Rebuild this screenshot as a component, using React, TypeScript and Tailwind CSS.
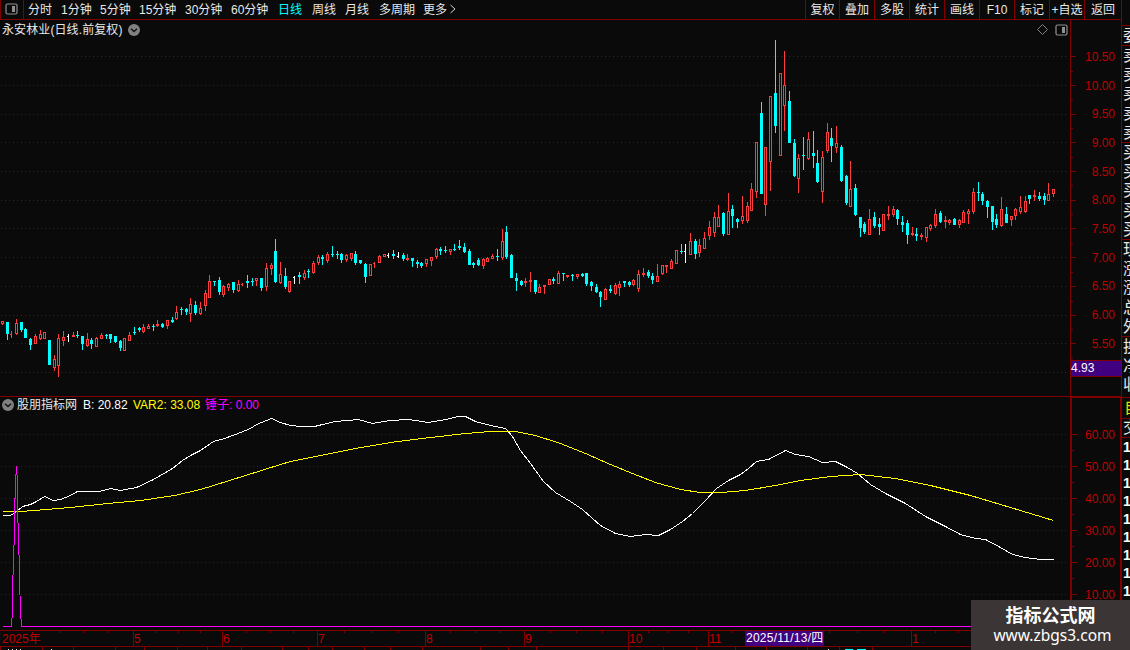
import React from 'react';

type Kind = 'r' | 'c' | 'w';
// x, high, body top, body bottom, low, kind
type Candle = [number, number, number, number, number, Kind];

const CANDLES: Candle[] = [
  [2, 321, 321, 324, 325, 'r'], [7, 322, 322, 334, 340, 'c'], [11, 331, 334, 335, 338, 'r'], [16, 319, 323, 334, 335, 'r'],
  [21, 322, 322, 330, 332, 'c'], [25, 328, 329, 338, 338, 'c'], [30, 338, 339, 345, 350, 'c'], [35, 334, 336, 344, 344, 'r'],
  [40, 330, 334, 339, 340, 'r'], [44, 332, 332, 339, 339, 'r'], [49, 340, 340, 365, 365, 'c'], [54, 355, 359, 368, 371, 'r'],
  [58, 334, 338, 366, 377, 'r'], [63, 331, 337, 341, 346, 'r'], [68, 334, 336, 337, 342, 'w'], [73, 332, 335, 337, 337, 'r'],
  [77, 331, 335, 336, 338, 'c'], [82, 336, 336, 344, 350, 'c'], [87, 333, 339, 346, 347, 'r'], [91, 338, 340, 344, 349, 'c'],
  [96, 337, 338, 347, 347, 'r'], [101, 333, 335, 339, 339, 'r'], [106, 334, 335, 336, 339, 'c'], [110, 334, 334, 339, 343, 'c'],
  [115, 336, 336, 342, 343, 'c'], [120, 340, 341, 348, 351, 'c'], [124, 338, 338, 351, 351, 'r'], [129, 332, 335, 341, 341, 'r'],
  [134, 327, 332, 333, 335, 'c'], [139, 327, 328, 330, 332, 'c'], [143, 324, 327, 332, 333, 'r'], [148, 324, 326, 329, 329, 'r'],
  [153, 324, 326, 327, 331, 'c'], [157, 320, 324, 326, 327, 'r'], [162, 323, 324, 327, 328, 'c'], [167, 320, 320, 326, 329, 'r'],
  [172, 317, 320, 322, 323, 'c'], [176, 306, 312, 319, 320, 'r'], [181, 307, 309, 310, 315, 'c'], [186, 308, 309, 312, 315, 'c'],
  [190, 298, 304, 314, 322, 'r'], [195, 301, 305, 313, 315, 'c'], [200, 302, 308, 314, 315, 'r'], [205, 290, 293, 306, 311, 'r'],
  [209, 275, 281, 298, 298, 'r'], [214, 281, 281, 282, 286, 'c'], [219, 277, 280, 292, 295, 'c'], [223, 285, 286, 295, 297, 'r'],
  [228, 283, 284, 288, 291, 'r'], [233, 282, 282, 290, 293, 'c'], [238, 280, 284, 291, 292, 'r'], [242, 283, 284, 285, 286, 'r'],
  [247, 275, 281, 283, 288, 'c'], [252, 278, 281, 282, 286, 'c'], [256, 278, 278, 281, 286, 'r'], [261, 278, 278, 288, 291, 'c'],
  [266, 263, 268, 287, 291, 'r'], [271, 263, 265, 269, 275, 'r'], [275, 239, 251, 282, 283, 'c'], [280, 262, 274, 283, 284, 'r'],
  [285, 268, 276, 287, 289, 'c'], [289, 281, 281, 292, 293, 'r'], [294, 276, 277, 278, 284, 'w'], [299, 272, 275, 277, 284, 'c'],
  [304, 270, 273, 278, 280, 'r'], [308, 269, 271, 272, 278, 'c'], [313, 261, 263, 273, 274, 'r'], [318, 255, 257, 263, 265, 'r'],
  [322, 255, 257, 259, 265, 'c'], [327, 252, 254, 261, 263, 'r'], [332, 246, 254, 255, 257, 'c'], [337, 251, 254, 255, 259, 'c'],
  [341, 253, 254, 260, 263, 'c'], [346, 254, 255, 260, 262, 'r'], [351, 253, 253, 259, 261, 'r'], [355, 251, 254, 263, 265, 'c'],
  [360, 260, 260, 263, 264, 'c'], [365, 263, 264, 277, 283, 'c'], [370, 264, 264, 276, 276, 'r'], [374, 262, 263, 264, 268, 'r'],
  [379, 255, 256, 263, 263, 'r'], [384, 254, 254, 257, 257, 'r'], [388, 253, 255, 256, 258, 'w'], [393, 250, 254, 256, 259, 'c'],
  [398, 252, 256, 257, 258, 'w'], [403, 253, 255, 259, 261, 'c'], [407, 254, 258, 260, 261, 'r'], [412, 258, 258, 261, 267, 'c'],
  [417, 260, 262, 264, 268, 'c'], [421, 262, 263, 266, 268, 'c'], [426, 259, 259, 264, 267, 'r'], [431, 257, 257, 261, 266, 'r'],
  [436, 248, 249, 257, 259, 'r'], [440, 247, 249, 251, 255, 'c'], [445, 246, 250, 251, 253, 'c'], [450, 249, 249, 252, 255, 'r'],
  [454, 244, 249, 250, 251, 'c'], [459, 240, 246, 248, 250, 'c'], [464, 243, 247, 252, 253, 'c'], [469, 249, 251, 265, 265, 'c'],
  [473, 262, 263, 265, 268, 'c'], [478, 258, 260, 265, 266, 'c'], [483, 258, 259, 266, 269, 'r'], [487, 257, 258, 262, 262, 'r'],
  [492, 254, 256, 259, 259, 'r'], [497, 249, 256, 257, 261, 'c'], [502, 229, 241, 258, 260, 'r'], [506, 226, 232, 257, 259, 'c'],
  [511, 254, 255, 278, 278, 'c'], [516, 273, 278, 281, 291, 'c'], [521, 280, 281, 285, 286, 'c'], [525, 278, 281, 283, 287, 'r'],
  [530, 272, 280, 282, 292, 'r'], [535, 280, 280, 292, 294, 'c'], [539, 284, 287, 293, 293, 'r'], [544, 285, 285, 287, 294, 'r'],
  [549, 279, 279, 285, 285, 'r'], [553, 277, 279, 281, 284, 'c'], [558, 271, 273, 284, 284, 'r'], [563, 273, 273, 274, 281, 'c'],
  [567, 275, 275, 277, 278, 'r'], [572, 274, 275, 276, 281, 'c'], [577, 274, 274, 277, 279, 'r'], [582, 273, 274, 276, 277, 'c'],
  [586, 273, 273, 284, 286, 'c'], [591, 281, 282, 286, 291, 'c'], [596, 284, 287, 292, 293, 'c'], [600, 291, 292, 297, 307, 'c'],
  [605, 288, 289, 300, 300, 'r'], [610, 285, 289, 291, 293, 'c'], [615, 283, 285, 294, 295, 'r'], [619, 281, 284, 288, 296, 'r'],
  [624, 281, 281, 283, 287, 'c'], [629, 281, 282, 285, 287, 'c'], [633, 279, 280, 285, 286, 'r'], [638, 270, 274, 289, 292, 'r'],
  [643, 268, 273, 275, 277, 'r'], [648, 270, 272, 276, 278, 'c'], [652, 273, 276, 280, 284, 'c'], [657, 264, 276, 282, 282, 'r'],
  [662, 265, 265, 274, 275, 'r'], [666, 265, 265, 267, 273, 'r'], [671, 259, 261, 269, 269, 'r'], [676, 250, 250, 264, 264, 'r'],
  [681, 244, 251, 252, 254, 'c'], [685, 244, 251, 252, 263, 'w'], [690, 233, 241, 255, 255, 'r'], [695, 239, 241, 254, 259, 'c'],
  [699, 239, 245, 253, 257, 'r'], [704, 232, 238, 249, 249, 'r'], [709, 221, 227, 236, 240, 'r'], [714, 212, 217, 233, 237, 'r'],
  [718, 205, 217, 227, 227, 'r'], [723, 212, 213, 234, 236, 'c'], [728, 193, 211, 235, 235, 'r'], [732, 205, 209, 216, 228, 'c'],
  [737, 218, 219, 222, 228, 'c'], [742, 196, 216, 221, 224, 'r'], [747, 202, 206, 221, 223, 'r'], [751, 183, 189, 211, 211, 'r'],
  [756, 142, 142, 192, 198, 'r'], [761, 102, 113, 194, 194, 'c'], [765, 147, 147, 205, 216, 'r'], [770, 96, 96, 162, 191, 'r'],
  [775, 40, 93, 126, 133, 'c'], [780, 73, 73, 156, 156, 'r'], [784, 51, 85, 106, 131, 'r'], [789, 91, 101, 143, 143, 'c'],
  [794, 139, 143, 176, 177, 'c'], [798, 154, 158, 179, 193, 'r'], [803, 137, 155, 156, 170, 'c'], [808, 132, 139, 159, 160, 'r'],
  [813, 131, 153, 156, 168, 'c'], [817, 150, 163, 182, 183, 'c'], [822, 151, 157, 192, 203, 'r'], [827, 123, 132, 151, 153, 'r'],
  [831, 128, 138, 146, 162, 'c'], [836, 126, 143, 148, 153, 'r'], [841, 145, 147, 181, 182, 'c'], [846, 175, 176, 203, 205, 'c'],
  [850, 161, 189, 207, 207, 'r'], [855, 184, 188, 215, 216, 'c'], [860, 217, 217, 228, 237, 'c'], [864, 222, 224, 232, 234, 'c'],
  [869, 209, 219, 235, 235, 'r'], [874, 212, 217, 226, 228, 'c'], [879, 218, 224, 227, 235, 'c'], [883, 214, 214, 231, 231, 'r'],
  [888, 206, 214, 216, 220, 'r'], [893, 206, 209, 215, 217, 'r'], [897, 209, 210, 219, 225, 'c'], [902, 216, 222, 225, 232, 'c'],
  [907, 220, 223, 235, 244, 'c'], [912, 227, 233, 235, 236, 'r'], [916, 228, 234, 236, 241, 'c'], [921, 233, 235, 237, 240, 'r'],
  [926, 227, 227, 238, 242, 'r'], [930, 224, 225, 229, 231, 'r'], [935, 209, 214, 226, 228, 'r'], [940, 211, 213, 222, 223, 'c'],
  [945, 216, 220, 222, 228, 'r'], [949, 219, 220, 223, 225, 'r'], [954, 218, 219, 225, 225, 'c'], [959, 219, 220, 225, 228, 'r'],
  [963, 210, 212, 223, 223, 'r'], [968, 209, 211, 214, 224, 'r'], [973, 188, 192, 212, 214, 'r'], [978, 182, 192, 193, 201, 'c'],
  [982, 192, 194, 201, 205, 'c'], [987, 200, 201, 207, 218, 'c'], [992, 206, 206, 222, 230, 'c'], [996, 214, 219, 225, 228, 'c'],
  [1001, 197, 209, 226, 227, 'r'], [1006, 207, 214, 223, 223, 'c'], [1011, 216, 216, 220, 226, 'r'], [1015, 208, 209, 216, 220, 'r'],
  [1020, 196, 207, 212, 214, 'r'], [1025, 196, 201, 212, 213, 'r'], [1029, 195, 195, 199, 204, 'c'], [1034, 190, 195, 197, 201, 'r'],
  [1039, 192, 196, 199, 201, 'c'], [1044, 193, 196, 200, 205, 'c'], [1048, 183, 194, 201, 201, 'r'], [1053, 189, 189, 194, 197, 'r'],
];

const COLORS: Record<Kind, string> = { r: '#ff3c3c', c: '#00ffff', w: '#ffffff' };

const PRICE_GRID = [56, 85, 114, 142, 171, 200, 228, 257, 286, 315, 343, 372];
const PRICE_MINOR = [71, 100, 128, 157, 185, 214, 243, 272, 301, 329, 358];
const PRICES = ['10.50', '10.00', '9.50', '9.00', '8.50', '8.00', '7.50', '7.00', '6.50', '6.00', '5.50'];
const IND_GRID = [434, 466, 498, 530, 562, 594];
const IND_MINOR = [450, 482, 514, 546, 578];
const IND_VALUES = ['60.00', '50.00', '40.00', '30.00', '20.00', '10.00'];

const LINE_B =
  '2,515 9,515 14,513 16,511 22,506 30,504 36,501 44,496 53,500 60,499 70,495 77,491 99,491 110,488 120,490 136,487 153,479 172,468 182,460 190,455 200,450 213,441 224,438 235,434 250,428 256,424 271,418 280,422 290,425 300,426 314,426 322,424 335,421 358,419 372,423 390,420 408,419 428,422 445,419 458,416 465,416 475,421 490,425 505,428 512,436 520,450 530,463 543,481 555,492 570,501 582,509 600,525 615,533 630,536 645,534 658,535 670,529 682,521 692,513 705,500 716,488 728,480 740,474 748,468 756,461 768,459 785,450 795,454 808,456 822,462 835,461 847,467 857,473 870,484 885,493 905,503 925,516 945,526 960,534 975,538 985,539 1000,547 1012,554 1025,557 1040,559 1053,559';
const LINE_VAR2 =
  '2,511 20,511 33,510 70,507 107,503 140,500 174,495 200,489 213,485 245,475 280,464 290,461 320,455 355,448 390,442 430,437 465,433 490,431 515,431 535,435 560,443 585,453 610,464 632,473 655,482 680,489 700,492 720,492 745,490 775,485 800,480 830,476 860,474 895,478 930,485 970,495 1010,507 1053,520';
const LINE_HAMMER = '2,626 11,626 12,610 12,590 14,530 14,515 15,482 16,466 17,482 17,515 18,530 19,578 20,611 21,626 1070,626';

const PERIODS = [
  { label: '分时', cls: 'w-[33px]' },
  { label: '1分钟', cls: 'w-[39px]' },
  { label: '5分钟', cls: 'w-[39px]' },
  { label: '15分钟', cls: 'w-[46px]' },
  { label: '30分钟', cls: 'w-[46px]' },
  { label: '60分钟', cls: 'w-[47px]' },
  { label: '日线', cls: 'w-[34px] text-[#00ffff]' },
  { label: '周线', cls: 'w-[33px]' },
  { label: '月线', cls: 'w-[34px]' },
  { label: '多周期', cls: 'w-[44px]' },
  { label: '更多', cls: 'w-[26px]' },
];

const TOOLS = [
  { label: '复权', cls: 'w-[34px]' },
  { label: '叠加', cls: 'w-[35px]' },
  { label: '多股', cls: 'w-[35px]' },
  { label: '统计', cls: 'w-[35px]' },
  { label: '画线', cls: 'w-[35px]' },
  { label: 'F10', cls: 'w-[35px]' },
  { label: '标记', cls: 'w-[35px]' },
  { label: '+自选', cls: 'w-[35px]' },
  { label: '返回', cls: 'w-[37px]' },
];

const MONTHS = [
  { label: '5', cls: 'w-[89px]' },
  { label: '6', cls: 'w-[95px]' },
  { label: '7', cls: 'w-[108px]' },
  { label: '8', cls: 'w-[99px]' },
  { label: '9', cls: 'w-[104px]' },
  { label: '10', cls: 'w-[80px]' },
  { label: '11', cls: 'w-[203px]' },
  { label: '1', cls: 'w-[200px]' },
];
const TIME_TICKS = [59, 84, 108, 155, 178, 200, 246, 270, 293, 344, 371, 398, 450, 475, 499, 550, 576, 602, 648, 668, 688, 732, 829, 857, 884, 935, 958];
const FOOT_TICKS = [0, 42, 73, 115, 144, 177, 207, 241, 282, 308, 332, 364, 390, 422, 480, 508, 536, 628, 663, 696, 735, 766, 807, 839, 872];

const QUOTE_GROUPS = [
  { rows: ['委'], cls: 'h-[20px]' },
  { rows: ['卖', '卖', '卖', '卖', '卖'], cls: 'h-[97px]' },
  { rows: ['买', '买', '买', '买', '买'], cls: 'h-[97px]' },
  { rows: ['现', '涨', '涨', '总', '外'], cls: 'h-[97px]' },
  { rows: ['换', '净', '收'], cls: 'h-[61px]' },
];

const PanelIcon = ({ color }: { color: string }) => (
  <svg width="13" height="12" viewBox="0 0 13 12" className="shrink-0">
    <rect x="1" y="1" width="11" height="10" rx="1.5" fill="none" stroke={color} strokeWidth="1.2" />
    <rect x="7" y="3" width="3" height="6" fill={color} />
  </svg>
);

const CircleChevron = () => (
  <svg width="12" height="12" viewBox="0 0 12 12" className="shrink-0">
    <circle cx="6" cy="6" r="6" fill="#808080" />
    <path d="M3 4.7 6 7.6 9 4.7" fill="none" stroke="#111" strokeWidth="1.4" />
  </svg>
);

const Grid = ({ rows }: { rows: number[] }) => (
  <>
    {rows.map((y) => (
      <line key={y} x1="1" x2="1069" y1={y + 0.5} y2={y + 0.5} stroke="#800000" strokeDasharray="1 3" />
    ))}
  </>
);

const Ticks = ({ major, minor }: { major: number[]; minor: number[] }) => (
  <>
    {major.map((y) => <rect key={y} x="0" y={y} width="5" height="1" fill="#800000" />)}
    {minor.map((y) => <rect key={y} x="0" y={y} width="2" height="1" fill="#800000" />)}
  </>
);

const Toolbar = () => (
  <div className="flex h-[20px] shrink-0 border-b border-[#800000] text-[#e8e8e8]">
    <div className="flex w-[24px] items-center border-x border-[#800000] pl-1 pb-px">
      <PanelIcon color="#909090" />
    </div>
    <div className="flex items-center pl-[4px]">
      {PERIODS.map((p) => (
        <span key={p.label} className={`shrink-0 ${p.cls}`}>{p.label}</span>
      ))}
      <svg width="8" height="10" viewBox="0 0 8 10" className="mb-[2px]">
        <path d="M1.5 1 6 5 1.5 9" fill="none" stroke="#d0d0d0" />
      </svg>
    </div>
    <div className="ml-auto flex">
      {TOOLS.map((t) => (
        <div key={t.label} className={`flex shrink-0 items-center justify-center border-l border-[#800000] ${t.cls}`}>
          {t.label}
        </div>
      ))}
    </div>
  </div>
);

const PriceChart = () => (
  <div className="relative flex h-[376px] shrink-0">
    <svg width="1070" height="376" viewBox="0 20 1070 376" shapeRendering="crispEdges" className="shrink-0">
      <Grid rows={PRICE_GRID} />
      {CANDLES.map(([x, high, top, bottom, low, kind]) => {
        const color = COLORS[kind];
        const tall = bottom - top > 2;
        if (kind === 'r' && tall) {
          return (
            <g key={x}>
              <rect x={x} y={high} width="1" height={top - high} fill={color} />
              <rect x={x} y={bottom} width="1" height={low - bottom} fill={color} />
              <rect x={x - 0.5} y={top + 0.5} width="2" height={bottom - top - 1} fill="none" stroke={color} />
            </g>
          );
        }
        // one-pixel bodies only reach to the left of the wick
        const wide = bottom - top > 1 || kind === 'c';
        return (
          <g key={x} fill={color}>
            <rect x={x} y={high} width="1" height={low - high} />
            <rect x={x - 1} y={top} width={wide ? 3 : 2} height={bottom - top} />
          </g>
        );
      })}
    </svg>
    <div className="flex w-[51px] shrink-0 border-l border-[#800000]">
      <svg width="6" height="376" viewBox="0 20 6 376" shapeRendering="crispEdges" className="shrink-0">
        <Ticks major={PRICE_GRID} minor={PRICE_MINOR} />
      </svg>
      <div className="flex flex-1 flex-col pt-[22.5px] pr-[6px] text-right text-[#c00000]">
        {PRICES.map((p) => (
          <span key={p} className="flex h-[28.7px] shrink-0 items-center justify-end">{p}</span>
        ))}
      </div>
    </div>
    <div className="absolute top-0 left-[2px] flex h-[19px] items-center text-[#e8e8e8]">
      <span className="w-[126px] tracking-[0.1px]">永安林业(日线.前复权)</span>
      <CircleChevron />
    </div>
    <div className="absolute top-0 right-[53px] flex h-[19px] items-center gap-[7px]">
      <svg width="11" height="11" viewBox="0 0 11 11">
        <path d="M5.5.5 10.5 5.5 5.5 10.5.5 5.5Z" fill="none" stroke="#808080" />
      </svg>
      <PanelIcon color="#909090" />
    </div>
    <div className="absolute right-0 bottom-[19px] flex h-[17px] w-[50px] items-center border-y border-[#800000] bg-[#400080] pb-px text-white">
      4.93
    </div>
  </div>
);

const IndicatorChart = () => (
  <div className="relative flex h-[234px] shrink-0 border-t border-[#800000]">
    <svg width="1070" height="233" viewBox="0 397 1070 233" shapeRendering="crispEdges" className="shrink-0">
      <Grid rows={IND_GRID} />
      <g fill="none" transform="translate(0.5 0.5)">
        <polyline points={LINE_B} stroke="#ffffff" />
        <polyline points={LINE_VAR2} stroke="#ffff00" />
        <polyline points={LINE_HAMMER} stroke="#ff00ff" />
      </g>
    </svg>
    <div className="flex w-[51px] shrink-0 border-t border-r border-l-2 border-[#800000]">
      <svg width="6" height="232" viewBox="0 398 6 232" shapeRendering="crispEdges" className="shrink-0">
        <Ticks major={IND_GRID} minor={IND_MINOR} />
      </svg>
      <div className="flex flex-1 flex-col pt-[21px] pr-[5px] text-[#c00000]">
        {IND_VALUES.map((v) => (
          <span key={v} className="flex h-8 shrink-0 items-center justify-end">{v}</span>
        ))}
      </div>
    </div>
    <div className="absolute top-0 left-[2px] flex h-4 items-center">
      <CircleChevron />
      <span className="w-[65px] pl-[3px] text-[#e8e8e8]">股朋指标网</span>
      <span className="w-[52px] pl-[4px] text-white">B: 20.82</span>
      <span className="w-[72px] pl-[2px] text-[#ffff00]">VAR2: 33.08</span>
      <span className="pl-[2px] text-[#ff00ff]">锤子: 0.00</span>
    </div>
  </div>
);

const TimeAxis = () => (
  <div className="relative flex h-[17px] shrink-0 overflow-hidden border-y border-[#800000] text-[#c00000]">
    <div className="flex w-[133px] shrink-0 items-center pl-[2px]">2025年</div>
    {MONTHS.map((m) => (
      <div key={m.label} className={`flex shrink-0 items-center border-l border-[#800000] ${m.cls}`}>{m.label}</div>
    ))}
    <svg width="1121" height="2" className="absolute top-0 left-0" shapeRendering="crispEdges">
      {TIME_TICKS.map((x) => <rect key={x} x={x} y="0" width="1" height="2" fill="#800000" />)}
    </svg>
    <div className="absolute top-0 left-[745px] flex h-[15px] w-[79px] items-center bg-[#400080] pl-px pb-px tracking-[0.25px] whitespace-nowrap text-white">
      2025/11/13/四
    </div>
  </div>
);

const QuoteStrip = () => (
  <div className="flex w-[9px] shrink-0 flex-col overflow-hidden border-l border-[#800000] pt-[25px] text-[16px] leading-none text-[#e8e8e8]">
    {QUOTE_GROUPS.map((g, i) => (
      <div key={i} className={`flex shrink-0 flex-col border-t border-[#800000] pl-px ${g.cls}`}>
        {g.rows.map((r, j) => (
          <span key={j} className="flex h-[19.3px] w-4 shrink-0 items-center">{r}</span>
        ))}
      </div>
    ))}
    <div className="flex h-[21px] shrink-0 items-center border-t border-[#800000] pl-[2px] text-[#e0e000]"><span className="w-4 shrink-0">自</span></div>
    <div className="flex h-[20px] shrink-0 items-center border-y border-[#800000] pl-px"><span className="w-4 shrink-0">交</span></div>
    {[0, 1, 2, 3, 4, 5, 6, 7, 8].map((n) => (
      <span key={n} className="flex h-[18px] shrink-0 items-center pl-px text-[14px] font-bold text-white">1</span>
    ))}
  </div>
);

const App: React.FC = () => (
  <div className="relative flex h-[650px] w-[1130px] overflow-hidden bg-[#0a0a0a] font-['Liberation_Sans','Noto_Sans_CJK_SC',sans-serif] text-[12px] leading-none">
    <div className="flex w-[1121px] shrink-0 flex-col">
      <Toolbar />
      <PriceChart />
      <IndicatorChart />
      <TimeAxis />
      <svg width="1121" height="3" className="shrink-0" shapeRendering="crispEdges">
        {FOOT_TICKS.map((x) => <rect key={x} x={x} y="0" width="1" height="3" fill="#800000" />)}
        {[8, 12, 16, 20, 51].map((x) => <rect key={x} x={x} y="2" width="1" height="1" fill="#e8e8e8" />)}
        <rect x="828" y="2" width="1" height="1" fill="#e8e8e8" />
        <rect x="845" y="2" width="8" height="1" fill="#00ffff" />
        <rect x="857" y="2" width="9" height="1" fill="#00ffff" />
      </svg>
    </div>
    <QuoteStrip />
    {/* Watermark */}
    <div className="absolute right-0 bottom-0 flex h-[50px] w-[159px] flex-col items-center bg-[#3b3635] pt-[6px] text-white">
      <span className="text-[18px] leading-[20px] font-bold">指标公式网</span>
      <span className="pl-[4px] font-['Noto_Sans',sans-serif] text-[15.5px] leading-[19px]">www.zbgs3.com</span>
    </div>
  </div>
);

export default App;
